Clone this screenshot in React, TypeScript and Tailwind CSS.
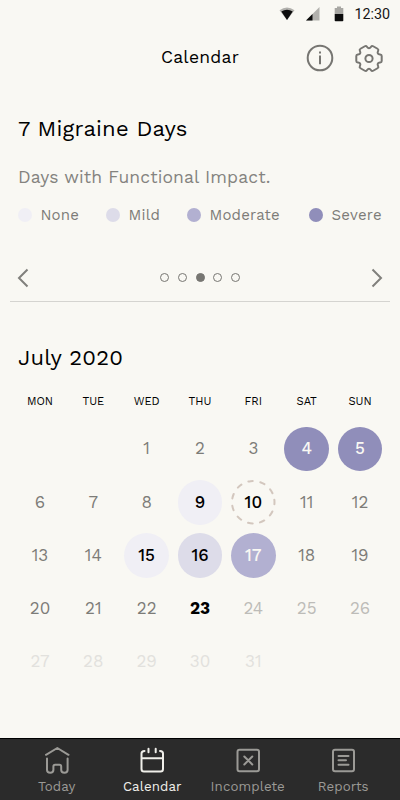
import clsx from 'clsx';
import type { ReactNode } from 'react';

type Level = 'none' | 'mild' | 'moderate' | 'severe' | 'pending' | 'today' | 'future' | 'faded';

const LEGEND = [
  { label: 'None', dot: 'bg-[#f0eff5]', place: 'w-[88px]' },
  { label: 'Mild', dot: 'bg-[#dddce9]', place: 'w-[81px]' },
  { label: 'Moderate', dot: 'bg-[#b2b0d1]', place: 'w-[122px]' },
  { label: 'Severe', dot: 'bg-[#908eba]', place: '' },
];

const WEEKDAYS = ['MON', 'TUE', 'WED', 'THU', 'FRI', 'SAT', 'SUN'];

const DAY_LEVELS: Record<number, Level> = {
  4: 'severe',
  5: 'severe',
  9: 'none',
  10: 'pending',
  15: 'none',
  16: 'mild',
  17: 'moderate',
  23: 'today',
  24: 'future',
  25: 'future',
  26: 'future',
  27: 'faded',
  28: 'faded',
  29: 'faded',
  30: 'faded',
  31: 'faded',
};

const LEVEL_CLASSES: Record<Level, string> = {
  none: 'bg-[#f0eff5] text-black font-medium',
  mild: 'bg-[#dddce9] text-black font-medium',
  moderate: 'bg-[#b2b0d1] text-[#f9f8f3] font-medium',
  severe: 'bg-[#908eba] text-[#f9f8f3] font-medium',
  pending: 'text-black font-medium',
  today: 'text-black font-bold',
  future: 'text-[#bdbcb8]',
  faded: 'text-[#e2e1dd]',
};

// Six-toothed cog with softened corners, centred on 0,0
function gearPath() {
  const tooth = [[9.4, -4.2], [12.7, -4], [12.7, 4], [9.4, 4.2]];
  const points = Array.from({ length: 6 }).flatMap((_, i) => {
    const a = (i * Math.PI) / 3;
    return tooth.map(([x, y]) => [x * Math.cos(a) - y * Math.sin(a), x * Math.sin(a) + y * Math.cos(a)]);
  });
  const toward = (from: number[], to: number[]) => {
    const len = Math.hypot(to[0] - from[0], to[1] - from[1]);
    const t = Math.min(1.5, len / 2) / len;
    return `${from[0] + (to[0] - from[0]) * t} ${from[1] + (to[1] - from[1]) * t}`;
  };
  return (
    points
      .map((p, i) => {
        const prev = points[(i + points.length - 1) % points.length];
        const next = points[(i + 1) % points.length];
        return `${i === 0 ? 'M' : 'L'}${toward(p, prev)}Q${p[0]} ${p[1]} ${toward(p, next)}`;
      })
      .join('') + 'Z'
  );
}

function StatusBar() {
  return (
    <div className="flex h-7 items-center justify-end pr-[10px] font-[Roboto,sans-serif]">
      <svg width="16" height="14" viewBox="0 0 16 14" className="mr-[11px]">
        <path d="M.5 3.2Q8-2.3 15.500 3.200L8 13Z" fill="#b2b1ad" />
        <path d="M2.300 4.500Q8 1.200 13.700 4.500L8 13Z" fill="#0c0c0c" />
      </svg>
      <svg width="14" height="14" viewBox="0 0 14 14" className="mr-[14px]">
        <path d="M0 13.500 13.500 0V13.500Z" fill="#b2b1ad" />
        <path d="M0 13.500 6.500 7V13.500Z" fill="#0c0c0c" />
      </svg>
      <svg width="10" height="16" viewBox="0 0 10 16" className="mr-[10px]">
        <path d="M3 .5h4V2h2.300v6H.7V2H3Z" fill="#a8a7a3" />
        <path d="M.7 8h8.600v6.500q0 .8-.8.8h-7q-.8 0-.8-.8Z" fill="#0c0c0c" />
      </svg>
      <span className="text-[14.300px] leading-4 text-[#151515]">12:30</span>
    </div>
  );
}

function Header() {
  return (
    <header className="grid h-[60px] grid-cols-[1fr_auto_1fr] items-center">
      <span />
      <h1 className="pb-[2px] text-[17.500px] tracking-[0.250px] text-black">Calendar</h1>
      <div className="flex items-center justify-end gap-[19px] pr-[16px] text-[#777672]">
        <button aria-label="Information">
          <svg width="30" height="30" viewBox="0 0 30 30" fill="none" stroke="currentColor" strokeWidth="2">
            <circle cx="15" cy="15" r="12.300" />
            <path d="M15 12.500v8.700M15 8.500v2" />
          </svg>
        </button>
        <button aria-label="Settings">
          <svg width="30" height="30" viewBox="-15 -15.500 30 30" fill="none" stroke="currentColor" strokeWidth="2" strokeLinejoin="round">
            <path d={gearPath()} />
            <circle r="3.600" />
          </svg>
        </button>
      </div>
    </header>
  );
}

function Carousel() {
  return (
    <div className="mx-[10px] flex h-[49px] items-center justify-between border-b border-[#d5d4d0] px-[6px] pt-px text-[#81807c]">
      <button aria-label="Previous">
        <svg width="14" height="20" viewBox="0 0 14 20" fill="none" stroke="currentColor" strokeWidth="2">
          <path d="m11.500 1.500-8.500 8.500 8.500 8.500" />
        </svg>
      </button>
      <div className="flex gap-[8.800px]">
        {[0, 1, 2, 3, 4].map((i) => (
          <span
            key={i}
            className={clsx('size-[9px] rounded-full border border-[#777672]', i === 2 && 'bg-[#777672]')}
          />
        ))}
      </div>
      <button aria-label="Next">
        <svg width="14" height="20" viewBox="0 0 14 20" fill="none" stroke="currentColor" strokeWidth="2">
          <path d="m2.500 1.500 8.500 8.500-8.500 8.500" />
        </svg>
      </button>
    </div>
  );
}

function Day({ day }: { day: number }) {
  const level = DAY_LEVELS[day];
  return (
    <div className="flex h-[53.300px] items-center justify-center">
      <div
        className={clsx(
          'relative flex size-[44.500px] items-center justify-center rounded-full text-[17px]',
          level ? LEVEL_CLASSES[level] : 'text-[#7d7c78]',
        )}
      >
        {level === 'pending' && (
          <svg className="absolute inset-0 size-full" viewBox="0 0 44 44" fill="none">
            <circle
              cx="22"
              cy="22"
              r="21"
              stroke="#d3c7be"
              strokeWidth="2"
              strokeLinecap="round"
              strokeDasharray="4.500 7.495"
              transform="rotate(-7 22 22)"
            />
          </svg>
        )}
        <span>{day}</span>
      </div>
    </div>
  );
}

function NavItem({ label, active, children }: { label: string; active?: boolean; children: ReactNode }) {
  return (
    <button className={clsx('flex flex-col items-center pt-[6px]', active ? 'text-[#f0efea]' : 'text-[#9b9a96]')}>
      <svg width="30" height="30" viewBox="0 0 30 30" fill="none" stroke="currentColor" strokeWidth="2" strokeLinecap="round" strokeLinejoin="round">
        {children}
      </svg>
      <span className="mt-[4px] text-[13.300px] leading-4 tracking-[0.100px]">{label}</span>
    </button>
  );
}

export default function App() {
  const days = Array.from({ length: 31 }, (_, i) => i + 1);

  return (
    <div className="flex h-[800px] w-[400px] flex-col overflow-hidden bg-[#f9f8f3] font-[Work_Sans,Inter,sans-serif]">
      <StatusBar />
      <Header />

      <section className="h-[165px] px-[18px] pt-[27px]">
        <h2 className="text-[22px] leading-[28px] tracking-[0.200px] whitespace-nowrap text-black">7 Migraine Days</h2>
        <p className="mt-[22px] text-[17.500px] leading-6 tracking-[0.130px] whitespace-nowrap text-[#84837f]">
          Days with Functional Impact.
        </p>
        <div className="mt-[16px] flex h-5 items-center">
          {LEGEND.map((item) => (
            <div key={item.label} className={clsx('flex shrink-0 items-center gap-[9px]', item.place)}>
              <span className={clsx('size-[13.500px] rounded-full', item.dot)} />
              <span className="text-[15px] leading-5 tracking-[0.200px] text-[#7d7c78]">{item.label}</span>
            </div>
          ))}
        </div>
      </section>

      <Carousel />

      <section className="flex-1 pt-[42px]">
        <h2 className="px-[18px] text-[22px] leading-[28px] tracking-[0.200px] text-black">July 2020</h2>
        <div className="mt-[22px] grid grid-cols-7 px-[13.300px]">
          {WEEKDAYS.map((name) => (
            <span key={name} className="text-center text-[11.200px] leading-4 text-black">
              {name}
            </span>
          ))}
        </div>
        <div className="mt-[12.400px] grid grid-cols-7 px-[13.300px]">
          {/* July starts on a Wednesday */}
          <div className="col-span-2" />
          {days.map((day) => (
            <Day key={day} day={day} />
          ))}
        </div>
      </section>

      <nav className="grid h-[62px] grid-cols-4 border-t border-black bg-[#2b2b2b] px-[9px]">
        <NavItem label="Today">
          <path d="M4 9.800 15.300 3 26.500 9.800M5 13.500v11.500q0 2.700 3.200 2.700t3.200-2.700v-3.500q0-1.700 1.700-1.700h4.400q1.700 0 1.700 1.700v3.500q0 2.700 3.200 2.700t3.200-2.700V13.500" />
        </NavItem>
        <NavItem label="Calendar" active>
          <path d="M7.500 6Q4.500 6 4.500 8.500V24q0 2.500 2.500 2.500h16.500q2.500 0 2.500-2.500V8.500Q26 6 23 6M11.500 3.700v3.500M18.700 3.700v3.500M4.500 13.300H26" />
        </NavItem>
        <NavItem label="Incomplete">
          <rect x="4.500" y="4.700" width="21.500" height="21.500" rx="2" />
          <path d="m11.300 11.500 8 8M19.300 11.500l-8 8" />
        </NavItem>
        <NavItem label="Reports">
          <rect x="5" y="4.700" width="21" height="21.500" rx="2" />
          <path d="M10.500 11h10M10.500 15.300h7.500M10.500 19.700h10" />
        </NavItem>
      </nav>
    </div>
  );
}
